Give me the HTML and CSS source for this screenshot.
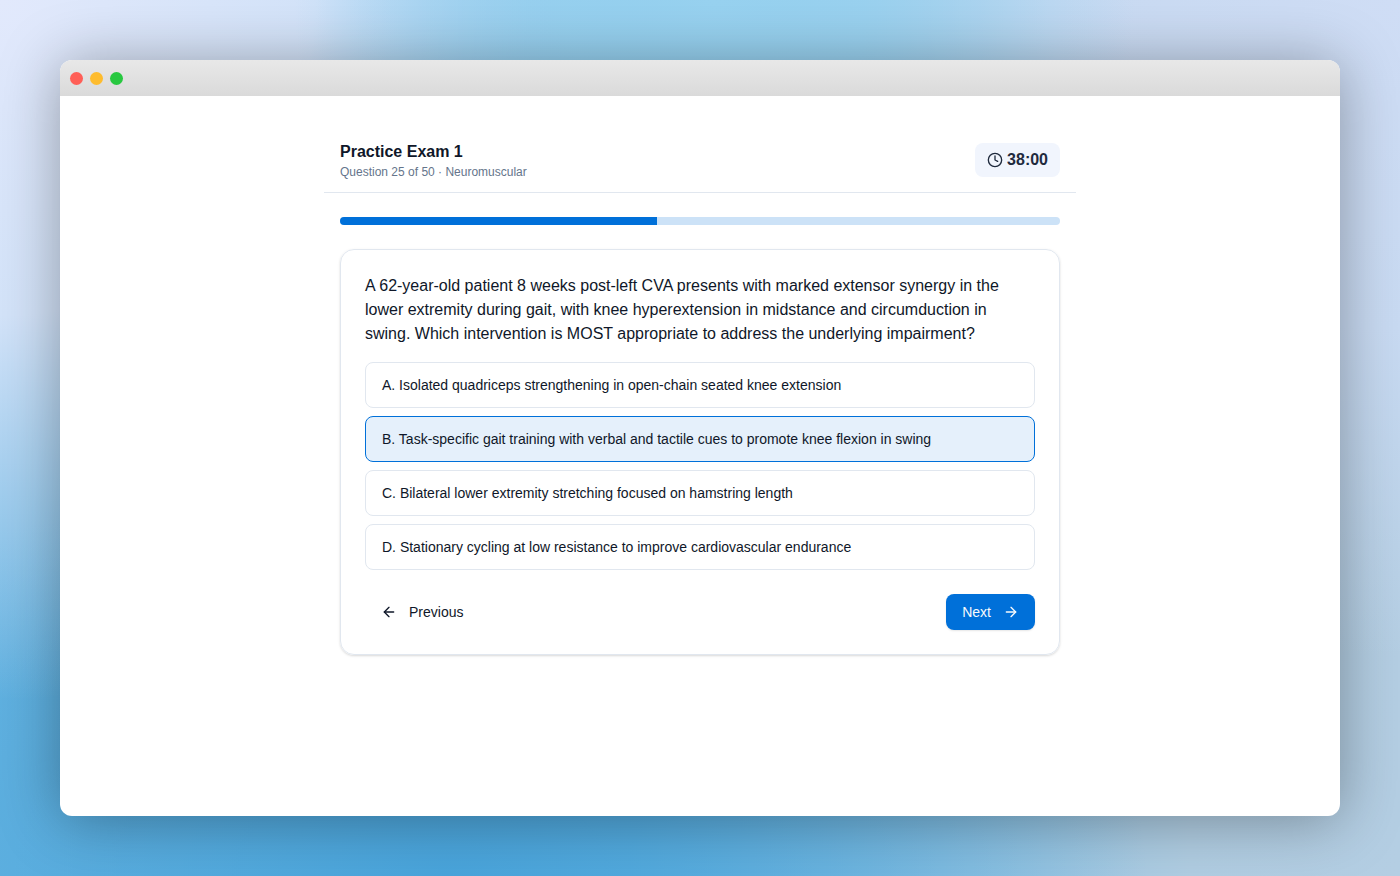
FILE: index.html
```html
<!DOCTYPE html>
<html lang="en">
<head>
  <meta charset="utf-8">
  <meta name="viewport" content="width=device-width, initial-scale=1">
  <title>Practice Exam 1</title>
  <link rel="stylesheet" href="styles.css">
</head>
<body>
  <div class="window">
    <div class="titlebar">
      <span class="dot dot-close"></span>
      <span class="dot dot-minimize"></span>
      <span class="dot dot-zoom"></span>
    </div>
    <main class="exam">
      <header class="exam-header">
        <div>
          <h1 class="exam-title">Practice Exam 1</h1>
          <p class="exam-meta">Question 25 of 50 · Neuromuscular</p>
        </div>
        <div class="timer">
          <svg class="icon" viewBox="0 0 24 24" aria-hidden="true"><circle cx="12" cy="12" r="10"/><path d="M12 6v6l4 2"/></svg>
          <span>38:00</span>
        </div>
      </header>
      <div class="progress" role="progressbar" aria-label="Exam progress" aria-valuenow="44" aria-valuemin="0" aria-valuemax="100">
        <div class="progress-fill" style="width: 44%"></div>
      </div>
      <section class="card">
        <p class="question">A 62-year-old patient 8 weeks post-left CVA presents with marked extensor synergy in the lower extremity during gait, with knee hyperextension in midstance and circumduction in swing. Which intervention is MOST appropriate to address the underlying impairment?</p>
        <div class="options">
          <button class="option" type="button" aria-pressed="false">A. Isolated quadriceps strengthening in open-chain seated knee extension</button>
          <button class="option option-selected" type="button" aria-pressed="true">B. Task-specific gait training with verbal and tactile cues to promote knee flexion in swing</button>
          <button class="option" type="button" aria-pressed="false">C. Bilateral lower extremity stretching focused on hamstring length</button>
          <button class="option" type="button" aria-pressed="false">D. Stationary cycling at low resistance to improve cardiovascular endurance</button>
        </div>
        <nav class="actions">
          <button class="btn" type="button">
            <svg class="icon" viewBox="0 0 24 24" aria-hidden="true"><path d="m12 19-7-7 7-7"/><path d="M19 12H5"/></svg>
            Previous
          </button>
          <button class="btn btn-primary" type="button">
            Next
            <svg class="icon" viewBox="0 0 24 24" aria-hidden="true"><path d="M5 12h14"/><path d="m12 5 7 7-7 7"/></svg>
          </button>
        </nav>
      </section>
    </main>
  </div>
</body>
</html>
```
FILE: styles.css
```css
*, *::before, *::after { box-sizing: border-box; }

body {
  margin: 0;
  min-height: 100vh;
  padding: 60px;
  display: flex;
  font-family: "Liberation Sans", Arial, sans-serif;
  font-size: 16px;
  line-height: 24px;
  color: #0f1729;
  background:
    radial-gradient(ellipse 30% 50% at 51% 0%, #98d2f0 0%, #98d2f0e0 35%, #98d2f000 100%),
    radial-gradient(ellipse 50% 80% at 0% 0%, #e2e9fc 0%, #d3e3f9 45%, #d3e3f900 100%),
    radial-gradient(ellipse 50% 75% at 100% 0%, #cfddf5 0%, #c8daf2 50%, #c8daf200 100%),
    radial-gradient(ellipse 50% 50% at 32% 100%, #49a4db 0%, #49a4db00 100%),
    linear-gradient(90deg, #66b4e1 0%, #68b6e2 45%, #b0cde2 85%, #b4cee3 100%);
}

h1, p { margin: 0; }
button { font: inherit; color: inherit; cursor: pointer; }

.window {
  flex: 1;
  min-width: 0;
  overflow: hidden;
  border-radius: 12px;
  background: #fff;
  box-shadow: 0 4px 60px rgba(0, 0, 0, 0.34);
}

.titlebar {
  display: flex;
  align-items: center;
  gap: 7px;
  height: 36px;
  padding: 0 10px;
  background: linear-gradient(#e8e8e8, #dadada);
}
.dot { width: 13px; height: 13px; border-radius: 50%; }
.dot-close { background: #ff5f57; }
.dot-minimize { background: #febc2e; }
.dot-zoom { background: #28c840; }

.exam {
  max-width: 752px;
  margin: 0 auto;
  padding: 32px 0;
}

.exam-header {
  display: flex;
  align-items: center;
  justify-content: space-between;
  padding: 12px 16px;
  border-bottom: 1px solid #e1e7ef;
}
.exam-title { font-size: 16px; line-height: 24px; font-weight: 600; }
.exam-meta { font-size: 12px; line-height: 16px; color: #65758b; }

.timer {
  display: flex;
  align-items: center;
  gap: 4px;
  padding: 5px 12px;
  border-radius: 8px;
  background: #f1f5fd;
  color: #1f2a3d;
  font-weight: 600;
}

.icon {
  width: 16px;
  height: 16px;
  flex: none;
  fill: none;
  stroke: currentColor;
  stroke-width: 2;
  stroke-linecap: round;
  stroke-linejoin: round;
}

.progress {
  height: 8px;
  margin: 24px 16px;
  overflow: hidden;
  border-radius: 4px;
  background: #cce2f7;
}
.progress-fill { height: 100%; background: #0070d9; }

.card {
  margin: 0 16px;
  padding: 24px;
  border: 1px solid #e1e7ef;
  border-radius: 14px;
  box-shadow: 0 1px 3px rgba(0, 0, 0, 0.1), 0 1px 2px rgba(0, 0, 0, 0.06);
}

.options { display: grid; gap: 8px; margin-top: 16px; }
.option {
  padding: 12px 16px;
  border: 1px solid #e1e7ef;
  border-radius: 8px;
  background: #fff;
  font-size: 14px;
  line-height: 20px;
  text-align: left;
}
.option-selected { border-color: #0070d9; background: #e5f0fb; }

.actions { display: flex; justify-content: space-between; margin-top: 24px; }
.btn {
  display: flex;
  align-items: center;
  gap: 12px;
  padding: 8px 16px;
  border: 0;
  border-radius: 8px;
  background: none;
  font-size: 14px;
  line-height: 20px;
}
.btn-primary {
  background: #0070d9;
  color: #f8fafc;
  box-shadow: 0 1px 2px rgba(0, 0, 0, 0.1);
}
```
